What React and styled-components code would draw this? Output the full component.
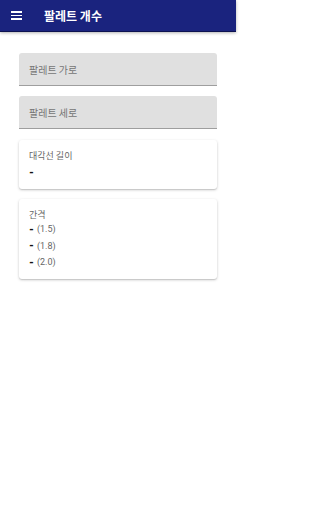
import React from 'react';
import styled, { createGlobalStyle } from 'styled-components';

const GlobalStyle = createGlobalStyle`
  html, body {
    margin: 0;
    padding: 0;
    background: #ffffff;
    font-family: Roboto, "Noto Sans CJK KR", sans-serif;
  }
`;

const Page = styled.div`
  width: 236px;
  min-height: 512px;
  background: #ffffff;
`;

const TopBar = styled.header`
  height: 32px;
  box-sizing: border-box;
  background: #1a237e;
  border-bottom: 1px solid #0d1250;
  display: flex;
  align-items: center;
  padding-left: 11px;
  box-shadow: 0 1px 3px rgba(0, 0, 0, 0.3);
`;

const MenuButton = styled.div`
  width: 11px;
  display: flex;
  flex-direction: column;
  gap: 2px;
  margin-right: 22px;

  span {
    display: block;
    height: 1.5px;
    background: #ffffff;
  }
`;

const Title = styled.h1`
  margin: 0;
  color: #ffffff;
  font-size: 12px;
  font-weight: 700;
  font-family: "Noto Sans CJK KR", sans-serif;
`;

const Content = styled.main`
  padding: 21px 19px 0 19px;
  display: flex;
  flex-direction: column;
  gap: 10px;
`;

const Field = styled.div`
  height: 33px;
  box-sizing: border-box;
  background: #e0e0e0;
  border-radius: 3px 3px 0 0;
  border-bottom: 1px solid #9e9e9e;
  display: flex;
  align-items: center;
  padding-left: 10px;
  color: #757575;
  font-size: 10px;
  font-family: "Noto Sans CJK KR", sans-serif;
`;

const Card = styled.section`
  background: #ffffff;
  border-radius: 3px;
  box-shadow: 0 1px 3px rgba(0, 0, 0, 0.2), 0 1px 1px rgba(0, 0, 0, 0.1);
  padding: 9px 10px 8px 10px;
  margin-top: ${(p) => (p.$first ? '1px' : '0')};
  min-height: ${(p) => p.$h || 'auto'};
  box-sizing: border-box;
`;

const CardLabel = styled.div`
  color: #666666;
  font-size: 9px;
  line-height: 13px;
  margin-bottom: ${(p) => p.$gap || '0'};
  font-family: "Noto Sans CJK KR", sans-serif;
`;

const ValueRow = styled.div`
  display: flex;
  align-items: center;
  gap: 3px;
  height: 16.5px;
  font-size: 9px;
  color: #666666;

  b {
    color: #111111;
    font-size: 11px;
    font-weight: 900;
  }
`;

export default function App() {
  return (
    <Page>
      <GlobalStyle />
      <TopBar>
        <MenuButton>
          <span />
          <span />
          <span />
        </MenuButton>
        <Title>팔레트 개수</Title>
      </TopBar>
      <Content>
        <Field>팔레트 가로</Field>
        <Field>팔레트 세로</Field>
        <Card $first $h="49px">
          <CardLabel $gap="2px">대각선 길이</CardLabel>
          <ValueRow><b>-</b></ValueRow>
        </Card>
        <Card $h="79px">
          <CardLabel>간격</CardLabel>
          <ValueRow><b>-</b>(1.5)</ValueRow>
          <ValueRow><b>-</b>(1.8)</ValueRow>
          <ValueRow><b>-</b>(2.0)</ValueRow>
        </Card>
      </Content>
    </Page>
  );
}
